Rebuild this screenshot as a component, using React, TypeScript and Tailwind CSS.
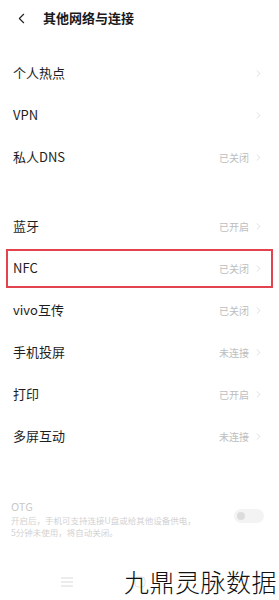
import { ChevronLeft, ChevronRight } from 'lucide-react'

const FONT = { fontFamily: '"Noto Sans CJK SC", "Noto Sans", sans-serif' }

const GROUP1 = [
  { label: '个人热点', value: '' },
  { label: 'VPN', value: '' },
  { label: '私人DNS', value: '已关闭' },
]

const GROUP2 = [
  { label: '蓝牙', value: '已开启' },
  { label: 'NFC', value: '已关闭', hl: true },
  { label: 'vivo互传', value: '已关闭' },
  { label: '手机投屏', value: '未连接' },
  { label: '打印', value: '已开启' },
  { label: '多屏互动', value: '未连接' },
]

function Row({ label, value, hl }: { label: string; value: string; hl?: boolean }) {
  return (
    <div className="h-[42px] px-[6px] flex items-center">
      <div
        className={`flex-1 h-[39px] flex items-center justify-between pl-[5px] pr-[7px] ${
          hl ? 'border-2 border-[#e2434f]' : 'border-2 border-transparent'
        }`}
      >
        <span className="text-[13px] text-[#1e1e1e]">{label}</span>
        <span className="flex items-center gap-[4px]">
          {value && <span className="text-[10px] text-[#bdbdbd]">{value}</span>}
          <ChevronRight size={11} strokeWidth={1.3} className="text-[#c8c8c8]" />
        </span>
      </div>
    </div>
  )
}

export default function App() {
  return (
    <div className="w-[279px] h-[600px] bg-white overflow-hidden relative" style={FONT}>
      {/* header */}
      <div className="h-[36px] flex items-center pl-[13px]">
        <ChevronLeft size={17} strokeWidth={1.6} className="text-[#222]" />
        <span className="ml-[13px] text-[13px] font-bold text-[#1a1a1a]">其他网络与连接</span>
      </div>

      <div className="mt-[16px]">
        {GROUP1.map((r) => (
          <Row key={r.label} {...r} />
        ))}
      </div>

      <div className="mt-[27px]">
        {GROUP2.map((r) => (
          <Row key={r.label} {...r} />
        ))}
      </div>

      {/* OTG */}
      <div className="mt-[42px] px-[11px] flex items-start justify-between">
        <div>
          <div className="text-[11px] leading-[14px] text-[#c9c9c9]">OTG</div>
          <div className="text-[8.5px] leading-[12px] text-[#d2d2d2] mt-[1px]">
            开启后，手机可支持连接U盘或给其他设备供电，
            <br />
            5分钟未使用，将自动关闭。
          </div>
        </div>
        <div className="mt-[10px] mr-[4px] w-[30px] h-[14px] rounded-full bg-[#f3f3f3] flex items-center pl-[3px]">
          <div className="w-[8px] h-[8px] rounded-full bg-[#dcdcdc]" />
        </div>
      </div>

      {/* bottom nav (faint) */}
      <div className="absolute left-0 right-0 bottom-[8px] h-[20px] flex items-center justify-around px-[30px]">
        <svg width="14" height="10" viewBox="0 0 14 10" fill="none" stroke="#d8d8d8" strokeWidth="1">
          <path d="M1 1h12M1 5h12M1 9h12" />
        </svg>
        <svg width="14" height="14" viewBox="0 0 14 14" fill="none" stroke="#e2e2e2" strokeWidth="1">
          <rect x="2" y="2" width="10" height="10" rx="3" />
        </svg>
        <svg width="14" height="14" viewBox="0 0 14 14" fill="none" stroke="#e2e2e2" strokeWidth="1">
          <path d="M9 2L4 7l5 5" />
        </svg>
      </div>

      {/* watermark */}
      <div className="absolute right-[2px] bottom-[2px] text-[25px] leading-[34px] font-light text-[#111] tracking-[0.5px]">
        九鼎灵脉数据
      </div>
    </div>
  )
}
